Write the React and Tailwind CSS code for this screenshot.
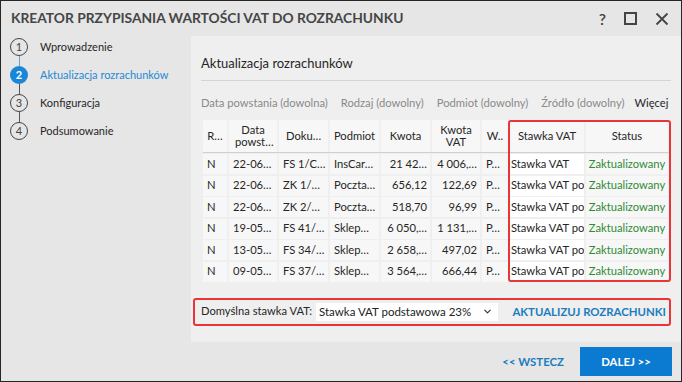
import React from 'react';
import { ChevronDown } from 'lucide-react';

const steps = [
    { n: 1, label: 'Wprowadzenie' },
    { n: 2, label: 'Aktualizacja rozrachunków', active: true },
    { n: 3, label: 'Konfiguracja' },
    { n: 4, label: 'Podsumowanie' },
];

const filters = ['Data powstania (dowolna)', 'Rodzaj (dowolny)', 'Podmiot (dowolny)', 'Źródło (dowolny)'];

const rows = [
    ['N', '22-06…', 'FS 1/C…', 'InsCar…', '21 42…', '4 006,…', 'P…', 'Stawka VAT'],
    ['N', '22-06…', 'ZK 1/…', 'Poczta…', '656,12', '122,69', 'P…', 'Stawka VAT podstawowa 23%'],
    ['N', '22-06…', 'ZK 2/…', 'Poczta…', '518,70', '96,99', 'P…', 'Stawka VAT podstawowa 23%'],
    ['N', '19-05…', 'FS 41/…', 'Sklep…', '6 050,…', '1 131,…', 'P…', 'Stawka VAT podstawowa 23%'],
    ['N', '13-05…', 'FS 34/…', 'Sklep…', '2 658,…', '497,02', 'P…', 'Stawka VAT podstawowa 23%'],
    ['N', '09-05…', 'FS 37/…', 'Sklep…', '3 564,…', '666,44', 'P…', 'Stawka VAT podstawowa 23%'],
];

const cols = 'grid grid-cols-[24px_48px_49px_49px_49px_48px_26px_74px_82px] gap-x-[2px]';

const App = () => {
    return (
        <div className="w-[682px] h-[382px] border border-[#262626] bg-[#e6e6e6] flex flex-col text-[#262626] font-['Lato',sans-serif] text-[11.2px] overflow-hidden whitespace-nowrap">
            {/* title bar */}
            <div className="h-[35px] shrink-0 flex items-center pl-[10px] pr-[12px]">
                <h1 className="font-bold text-[13.8px] text-[#454545]">
                    KREATOR PRZYPISANIA WARTOŚCI VAT DO ROZRACHUNKU
                </h1>
                <div className="ml-auto flex items-center gap-[18px] text-[#444]">
                    <span className="text-[16px] font-semibold leading-none">?</span>
                    <span className="w-[13px] h-[13px] border-2 border-[#444]"></span>
                    <svg width="14" height="14" viewBox="0 0 14 14">
                        <path d="M1.5 1.5 L12.5 12.5 M12.5 1.5 L1.5 12.5" stroke="#444" strokeWidth="1.8" />
                    </svg>
                </div>
            </div>

            <div className="flex flex-1 min-h-0">
                {/* steps */}
                <div className="w-[190px] shrink-0 pt-[2px] pl-[9px]">
                    {steps.map((s, i) => (
                        <div key={s.n} className="flex flex-col">
                            <div className="flex items-center h-[18px]">
                                <div
                                    className={`w-[18px] h-[18px] rounded-full flex items-center justify-center text-[11px] ${s.active
                                        ? 'bg-[#1a86d6] text-white font-bold'
                                        : 'border border-[#444] text-[#444]'
                                        }`}
                                >
                                    {s.n}
                                </div>
                                <span className={`ml-[12px] text-[11px] ${s.active ? 'text-[#2589d4]' : 'text-[#262626]'}`}>
                                    {s.label}
                                </span>
                            </div>
                            {i < steps.length - 1 && (
                                <div className={`ml-[8.5px] w-px h-[10px] ${i === 0 ? 'bg-[#5aa7e0]' : 'bg-[#555]'}`}></div>
                            )}
                        </div>
                    ))}
                </div>

                <div className="flex-1 min-w-0 flex flex-col">
                    {/* panel */}
                    <div className="h-[306px] shrink-0 bg-[#efefef] pl-[10px] pr-[10px] pt-[17px] flex flex-col">
                        <h2 className="h-[24px] leading-[20px] text-[13px] text-[#262626] pb-[3px] border-b border-[#d4d4d4] box-content">Aktualizacja rozrachunków</h2>

                        <div className="flex items-center h-[16px] mt-[14px] text-[#8a8a8a] gap-[13px]">
                            {filters.map((f) => (
                                <span key={f}>{f}</span>
                            ))}
                            <span className="text-[#262626] ml-[-3px]">Więcej</span>
                        </div>

                        {/* table */}
                        <div className="relative mt-[9px] ml-[2px]">
                            <div className={`${cols} h-[32px] text-center leading-[12px]`}>
                                {['R…', 'Data powst…', 'Doku…', 'Podmiot', 'Kwota', 'Kwota VAT', 'W..', 'Stawka VAT', 'Status'].map((h, i) => (
                                    <div key={i} className="bg-[#f7f7f7] flex items-center justify-center px-[2px] overflow-hidden">
                                        <span className={i === 1 || i === 5 ? 'whitespace-normal w-[36px]' : ''}>{h}</span>
                                    </div>
                                ))}
                            </div>
                            <div className="h-px bg-[#d0d0d0]"></div>
                            <div className="flex flex-col gap-y-[1.5px] mt-[1px]">
                                {rows.map((r, ri) => (
                                    <div key={ri} className={`${cols} h-[20px]`}>
                                        {r.map((c, ci) => (
                                            <div
                                                key={ci}
                                                className={`flex items-center overflow-hidden ${ci === 7 ? 'bg-white pl-[1px]' : 'bg-[#f7f7f7] px-[4px]'
                                                    } ${ci === 4 || ci === 5 ? 'justify-end pr-[3px]' : ''}`}
                                            >
                                                {c}
                                            </div>
                                        ))}
                                        <div className="bg-[#f7f7f7] flex items-center justify-center text-[#2e8b35] overflow-hidden">
                                            Zaktualizowany
                                        </div>
                                    </div>
                                ))}
                            </div>
                            {/* highlight */}
                            <div className="absolute left-[305px] top-0 w-[163px] h-[162px] border-2 border-[#e8353a] rounded-[3px] pointer-events-none"></div>
                        </div>

                        {/* default VAT */}
                        <div className="mt-[16px] ml-[-8px] w-[478px] h-[28px] border-2 border-[#e8353a] rounded-[3px] flex items-center pl-[6px] pr-[3px]">
                            <span className="w-[115px]">Domyślna stawka VAT:</span>
                            <div className="w-[182px] h-[18px] bg-white flex items-center pl-[3px] pr-[5px] text-[#222]">
                                <span className="text-[11.5px]">Stawka VAT podstawowa 23%</span>
                                <ChevronDown size={11} strokeWidth={2.5} className="ml-auto text-[#333]" />
                            </div>
                            <span className="ml-auto font-bold text-[11.4px] text-[#1b7cc0]">AKTUALIZUJ ROZRACHUNKI</span>
                        </div>
                    </div>

                    {/* footer */}
                    <div className="flex-1 flex items-center justify-end pr-[9px] gap-[16px]">
                        <button className="font-bold text-[11.4px] text-[#1b7cc0]">&lt;&lt; WSTECZ</button>
                        <button className="w-[92px] h-[29px] bg-[#0b7ad1] text-white text-[11.4px] font-bold">DALEJ &gt;&gt;</button>
                    </div>
                </div>
            </div>
        </div>
    );
};

export default App;
